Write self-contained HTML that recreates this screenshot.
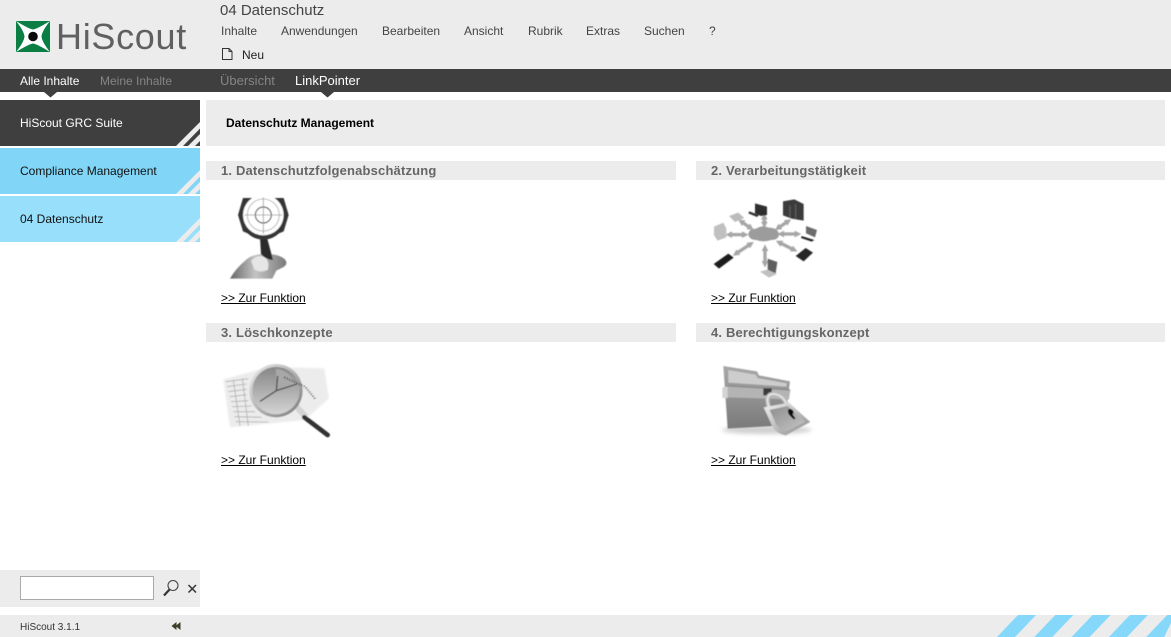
<!DOCTYPE html>
<html lang="de"><head><meta charset="utf-8"><title>HiScout</title>
<style>
html,body{margin:0;padding:0;background:#fff}
body{width:1171px;height:637px;overflow:hidden;position:relative;font-family:"Liberation Sans",Arial,sans-serif;font-size:12px;color:#000}
.b{position:absolute}
.t{position:absolute;white-space:nowrap;line-height:16px}
.h{position:absolute;height:19px;background:#ececec;font-weight:bold;font-size:13px;line-height:19px;color:#666;letter-spacing:.17px;padding-left:15px;box-sizing:border-box}
a{position:absolute;color:#000;text-decoration:underline;white-space:nowrap;line-height:16px}
.m{color:#444}
svg{position:absolute;left:0;top:0}
</style></head><body>
<div class="b" style="left:0;top:0;width:1171px;height:69px;background:#ececec"></div>
<div class="b" style="left:0;top:69px;width:1171px;height:23px;background:#3f3f3f"></div>
<div class="b" style="left:0;top:100px;width:200px;height:46px;background:#3f3f3f"></div>
<div class="b" style="left:0;top:148px;width:200px;height:46px;background:#81d6f8"></div>
<div class="b" style="left:0;top:196px;width:200px;height:46px;background:#97dffb"></div>
<div class="b" style="left:206px;top:100px;width:959px;height:46px;background:#ececec"></div>
<div class="b" style="left:0;top:570px;width:200px;height:37px;background:#ececec"></div>
<div class="b" style="left:0;top:615px;width:1171px;height:22px;background:#ececec"></div>
<div class="b" style="left:20px;top:576px;width:134px;height:24px;box-sizing:border-box;background:#fff;border:1px solid #aaa"></div>

<svg width="1171" height="637" viewBox="0 0 1171 637">
<defs>
<filter id="s" x="-10%" y="-10%" width="120%" height="120%"><feGaussianBlur stdDeviation="1.300"/></filter>
<filter id="bl" x="-30%" y="-30%" width="160%" height="160%"><feGaussianBlur stdDeviation="2.500"/></filter>
<filter id="bl2" x="-30%" y="-60%" width="160%" height="220%"><feGaussianBlur stdDeviation="6"/></filter>
<linearGradient id="hand" x1="0" y1="0" x2="1" y2="0"><stop offset="0" stop-color="#666"/><stop offset=".45" stop-color="#c4c4c4"/><stop offset="1" stop-color="#7a7a7a"/></linearGradient>
<linearGradient id="g1" x1="0" y1="0" x2="1" y2="1"><stop offset="0" stop-color="#eee"/><stop offset="1" stop-color="#777"/></linearGradient>
<linearGradient id="lens" x1="0" y1="0" x2="0" y2="1"><stop offset="0" stop-color="#868686"/><stop offset="1" stop-color="#d4d4d4"/></linearGradient>
<linearGradient id="g2" x1="0" y1="0" x2="0" y2="1"><stop offset="0" stop-color="#a8a8a8"/><stop offset="1" stop-color="#7a7a7a"/></linearGradient>
<linearGradient id="g3" x1="0" y1="0" x2="1" y2="1"><stop offset="0" stop-color="#f2f2f2"/><stop offset="1" stop-color="#8a8a8a"/></linearGradient>
<linearGradient id="g4" x1="0" y1="0" x2="1" y2="1"><stop offset="0" stop-color="#8d8d8d"/><stop offset="1" stop-color="#c6c6c6"/></linearGradient>
<marker id="ah" viewBox="0 0 4 4" markerWidth="2" markerHeight="2" refX="1" refY="2" orient="auto-start-reverse" markerUnits="strokeWidth"><path d="M0 0L4 2L0 4Z" fill="#a6a6a6"/></marker>
</defs>
<!-- logo -->
<rect x="16" y="21" width="34" height="31" fill="#0a7e43"/>
<path d="M16 21Q29 29 33 29.500Q37 29 50 21Q42 31 41.500 36.500Q42 42 50 52Q37 44 33 43.500Q29 44 16 52Q24 42 24.500 36.500Q24 31 16 21Z" fill="#fff"/>
<circle cx="33" cy="36.500" r="4.800" fill="#0c0c0c"/>
<!-- tab arrows -->
<path d="M44 92H57L50.500 97.500Z" fill="#3f3f3f"/>
<path d="M321 92H334L327.500 97.500Z" fill="#3f3f3f"/>
<!-- sidebar stripes -->
<g fill="#ececec">
<path d="M176 146L200 122V128.500L183 146Z"/><path d="M188 146L200 134V141L195 146Z"/>
<path d="M176 194L200 170V176.500L183 194Z"/><path d="M188 194L200 182V189L195 194Z"/>
<path d="M176 242L200 218V224.500L183 242Z"/><path d="M188 242L200 230V237L195 242Z"/>
</g>
<!-- footer stripes -->
<g fill="#85d8f9">
<path d="M997 637L1018 615H1036L1015 637Z"/><path d="M1034.300 637L1055.300 615H1073.300L1052.300 637Z"/>
<path d="M1071.600 637L1092.600 615H1110.600L1089.600 637Z"/><path d="M1108.900 637L1129.900 615H1147.900L1126.900 637Z"/>
<path d="M1146.200 637L1167.200 615H1171V622.900L1164.200 637Z"/>
</g>
<!-- neu icon -->
<path d="M222.500 48.500H229L232 51.500V59.500H222.500ZM229 48.500V51.500H232" fill="none" stroke="#333" stroke-width="1"/>
<!-- search icon / x / collapse -->
<circle cx="173" cy="585.500" r="5" fill="none" stroke="#444" stroke-width="1.100"/>
<path d="M169.500 589.500L164 595.500" stroke="#333" stroke-width="2.200"/>
<path d="M188.500 585L196 592.500M196 585L188.500 592.500" stroke="#333" stroke-width="1.500"/>
<path d="M176.500 622V630L171.500 626ZM180.500 622V630L175.500 626Z" fill="#3c4028"/>

<!-- image 1 -->
<g transform="translate(205,160) scale(.3333)">
<g filter="url(#s)">
<path d="M75 356Q92 326 118 304Q140 280 185 282Q222 282 240 298Q252 314 230 324L214 332Q208 345 202 356Z" fill="url(#hand)"/>
<path d="M138 302Q156 284 178 290Q196 304 188 330Q165 340 148 328Z" fill="#e6e6e6"/>
<path d="M165 232L168 282Q180 298 204 300L186 232Z" fill="#2c2c2c"/>
<path d="M114 114H236L251 165L236 214L222 220Q200 240 175 238Q150 240 128 220L114 214L99 165Z" fill="#343434"/>
<circle cx="175" cy="165" r="61" fill="#fff"/>
<circle cx="175" cy="165" r="48" fill="none" stroke="#aaa" stroke-width="2.500"/>
<circle cx="175" cy="165" r="24" fill="none" stroke="#555" stroke-width="3.500"/>
<path d="M175 112V222M118 165H232" stroke="#999" stroke-width="2.500"/>
</g>
</g>

<!-- image 2 -->
<g transform="translate(695,160) scale(.3333)">
<g filter="url(#s)">
<g stroke="#a6a6a6" stroke-width="10" fill="none">
<path d="M142 187L164 202" marker-start="url(#ah)" marker-end="url(#ah)"/>
<path d="M208 174V190" marker-start="url(#ah)" marker-end="url(#ah)"/>
<path d="M276 186L252 202" marker-start="url(#ah)" marker-end="url(#ah)"/>
<path d="M106 224H146" marker-start="url(#ah)" marker-end="url(#ah)"/>
<path d="M262 222H304" marker-start="url(#ah)" marker-end="url(#ah)"/>
<path d="M126 279L164 254" marker-start="url(#ah)" marker-end="url(#ah)"/>
<path d="M210 268V308" marker-start="url(#ah)" marker-end="url(#ah)"/>
<path d="M256 249L294 268" marker-start="url(#ah)" marker-end="url(#ah)"/>
</g>
<path d="M160 222Q162 206 184 206Q200 194 222 203Q248 204 252 222Q252 240 228 240Q205 248 184 240Q162 240 160 222Z" fill="#9c9c9c"/>
<path d="M102 168L130 158L148 174L120 186Z" fill="#bbb"/>
<path d="M57 200L85 188L94 205V232L68 242L57 226Z" fill="#c0c0c0"/>
<path d="M180 130L216 140V165L198 168L180 160Z" fill="#2e2e2e"/>
<path d="M163 154L192 165L186 171L160 160Z" fill="#333"/>
<path d="M264 124L298 118L326 132V182L290 176L264 166Z" fill="#3a3a3a"/>
<path d="M285 136V172M302 132V176" stroke="#777" stroke-width="2"/>
<path d="M333 198L366 210L360 232L333 220Z" fill="#6c6c6c"/>
<path d="M320 228L358 240L350 245L318 234Z" fill="#222"/>
<path d="M56 312L100 281L116 293L72 326Z" fill="#1e1e1e"/>
<path d="M302 288L332 264L354 278L326 304Z" fill="#262626"/>
<path d="M218 296L247 306L242 340L218 330Z" fill="#5e5e5e"/>
<path d="M195 335L218 329L246 342L222 353Z" fill="#c0c0c0"/>
</g>
</g>

<!-- image 3 -->
<g transform="translate(205,320) scale(.3333)">
<g filter="url(#s)">
<path d="M55 178L195 140L358 145L372 235L300 300L75 322Z" fill="#ececec" filter="url(#bl)"/>
<g stroke="#b0b0b0" stroke-width="2.500" fill="none">
<path d="M62 185L130 176M66 200L125 192M70 215L125 208M74 230L125 224M78 245L130 242M82 260L140 258M85 275L150 275M88 290L170 292M92 305L190 306"/>
<path d="M85 180L105 318M112 175L130 318"/>
</g>
<path d="M270 255L302 290" stroke="#d4d4d4" stroke-width="18"/>
<path d="M298 292L368 345" stroke="#333" stroke-width="14" stroke-linecap="round"/>
<circle cx="213" cy="212" r="80" fill="url(#g1)"/>
<circle cx="213" cy="212" r="71" fill="url(#lens)"/>
<path d="M212 146A66 66 0 0 1 272 200L218 212Z" fill="#a8a8a8"/>
<path d="M165 244L214 212L218 168M214 212L276 192" stroke="#3c3c3c" stroke-width="3.500" fill="none"/>
<path d="M238 172L300 200L330 236" stroke="#333" stroke-width="6" stroke-dasharray="3 5" fill="none"/>
</g>
</g>

<!-- image 4 -->
<g transform="translate(695,320) scale(.3333)">
<ellipse cx="215" cy="330" rx="135" ry="12" fill="#cfcfcf" filter="url(#bl2)"/>
<g filter="url(#s)">
<path d="M85 138L186 154L192 166L285 184L268 316L98 326Z" fill="url(#g2)"/>
<path d="M100 150L182 164L188 174L276 190L274 200L100 188Z" fill="#cdcdcd"/>
<path d="M82 202L100 200V234L82 234Z" fill="#d4d4d4"/>
<path d="M98 198L210 204L286 210L282 238L98 232Z" fill="#b4b4b4"/>
<path d="M98 198L286 210" stroke="#777" stroke-width="2"/>
<path d="M205 205H230V226H205Z" fill="#3a3a3a"/>
<path d="M222 262Q208 220 238 222Q268 226 278 262" fill="none" stroke="#bcbcbc" stroke-width="13"/>
<path d="M222 262Q208 220 238 222Q268 226 278 262" fill="none" stroke="#eee" stroke-width="4"/>
<path d="M206 262L282 248L346 306L272 346Q238 340 226 306Z" fill="url(#g3)"/>
<path d="M224 270L278 258L330 306L272 334Q245 325 238 300Z" fill="url(#g4)"/>
<path d="M280 268Q292 264 296 276L293 284L302 296L296 298L284 286Q276 276 280 268Z" fill="#111"/>
</g>
</g>
</svg>

<!-- logo text -->
<div class="t" style="left:56px;top:15px;font-size:36px;letter-spacing:.7px;line-height:44px;color:#606060">HiScout</div>

<!-- header -->
<div class="t" style="left:220px;top:3px;font-size:15px;color:#444">04 Datenschutz</div>
<div class="t m" style="left:221px;top:23px">Inhalte</div>
<div class="t m" style="left:281px;top:23px">Anwendungen</div>
<div class="t m" style="left:382px;top:23px">Bearbeiten</div>
<div class="t m" style="left:464px;top:23px">Ansicht</div>
<div class="t m" style="left:528px;top:23px">Rubrik</div>
<div class="t m" style="left:586px;top:23px">Extras</div>
<div class="t m" style="left:644px;top:23px">Suchen</div>
<div class="t m" style="left:709px;top:23px">?</div>
<div class="t" style="left:242px;top:47px;color:#222">Neu</div>

<!-- dark bar -->
<div class="t" style="left:20px;top:73px;color:#fff">Alle Inhalte</div>
<div class="t" style="left:100px;top:73px;color:#858585">Meine Inhalte</div>
<div class="t" style="left:220px;top:73px;font-size:13px;color:#858585">Übersicht</div>
<div class="t" style="left:295px;top:73px;font-size:13px;color:#fff">LinkPointer</div>

<!-- sidebar -->
<div class="t" style="left:20px;top:115px;color:#fff">HiScout GRC Suite</div>
<div class="t" style="left:20px;top:163px;color:#111">Compliance Management</div>
<div class="t" style="left:20px;top:211px;color:#111">04 Datenschutz</div>

<!-- content -->
<div class="t" style="left:226px;top:115px;font-weight:bold">Datenschutz Management</div>
<div class="h" style="left:206px;top:161px;width:470px">1. Datenschutzfolgenabschätzung</div>
<div class="h" style="left:696px;top:161px;width:469px">2. Verarbeitungstätigkeit</div>
<div class="h" style="left:206px;top:323px;width:470px">3. Löschkonzepte</div>
<div class="h" style="left:696px;top:323px;width:469px">4. Berechtigungskonzept</div>
<a href="#" style="left:221px;top:290px">&gt;&gt; Zur Funktion</a>
<a href="#" style="left:711px;top:290px">&gt;&gt; Zur Funktion</a>
<a href="#" style="left:221px;top:452px">&gt;&gt; Zur Funktion</a>
<a href="#" style="left:711px;top:452px">&gt;&gt; Zur Funktion</a>

<!-- footer -->
<div class="t" style="left:20px;top:620px;font-size:10px;color:#333">HiScout 3.1.1</div>
</body></html>
